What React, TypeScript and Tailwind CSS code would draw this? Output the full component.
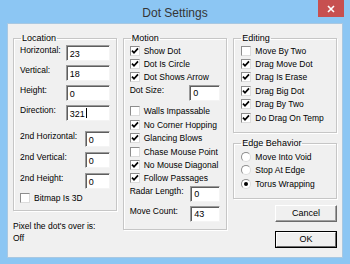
import React from "react";

const Check = ({ checked }: { checked: boolean }) => (
  <span className="w-[10px] h-[10px] bg-white border border-t-[#8d8d8d] border-l-[#8d8d8d] border-b-[#dcdcdc] border-r-[#dcdcdc] flex items-center justify-center shrink-0">
    {checked && (
      <svg width="8" height="8" viewBox="0 0 8 8">
        <path d="M1 3.6 L3 5.8 L7 1.4" stroke="#000" strokeWidth="1.7" fill="none" />
      </svg>
    )}
  </span>
);

const Radio = ({ checked }: { checked: boolean }) => (
  <span className="w-[10px] h-[10px] rounded-full bg-white border border-t-[#8d8d8d] border-l-[#8d8d8d] border-b-[#dcdcdc] border-r-[#dcdcdc] flex items-center justify-center shrink-0">
    {checked && <span className="w-[4px] h-[4px] rounded-full bg-black" />}
  </span>
);

const CheckRow = ({ label, checked }: { label: string; checked: boolean }) => (
  <div className="flex items-center gap-[4px] h-[13.4px]">
    <Check checked={checked} />
    <span className="leading-[10px] whitespace-nowrap">{label}</span>
  </div>
);

const RadioRow = ({ label, checked }: { label: string; checked: boolean }) => (
  <div className="flex items-center gap-[4px] h-[13.5px]">
    <Radio checked={checked} />
    <span className="leading-[10px] whitespace-nowrap">{label}</span>
  </div>
);

const Field = ({ value, w, cursor }: { value: string; w: string; cursor?: boolean }) => (
  <div
    className={`${w} h-[16px] bg-white border border-t-[#9a9a9a] border-l-[#9a9a9a] border-b-[#f4f4f4] border-r-[#f4f4f4] shadow-[inset_1px_1px_0_#5e5e5e] flex items-center pl-[3px] shrink-0`}
  >
    <span className="text-[9px] leading-[10px] pt-[1px]">{value}</span>
    {cursor && <span className="w-[1px] h-[10px] bg-black ml-[1px]" />}
  </div>
);

const LabeledField = ({
  label,
  value,
  w,
  cursor,
}: {
  label: string;
  value: string;
  w: string;
  cursor?: boolean;
}) => (
  <div className="flex items-start justify-between">
    <span className="leading-[10px] whitespace-nowrap">{label}</span>
    <Field value={value} w={w} cursor={cursor} />
  </div>
);

const Group = ({
  title,
  className,
  children,
}: {
  title: string;
  className?: string;
  children: React.ReactNode;
}) => (
  <fieldset className={`border border-[#c6c6c6] shadow-[inset_1px_1px_0_#ffffff,1px_1px_0_#ffffff] px-[6px] ${className ?? ""}`}>
    <legend className="px-[1px] ml-[1px] leading-[12px] text-[9px]">{title}</legend>
    {children}
  </fieldset>
);

export default function App() {
  return (
    <div className="w-[350px] h-[264px] bg-[#8cc6f3] flex flex-col font-['Liberation_Sans',Arial,sans-serif] text-[8.5px] text-black overflow-hidden">
      <div className="h-[23px] grid grid-cols-[1fr_auto_1fr] items-start">
        <div />
        <div className="text-[12px] leading-[12px] text-[#353535] pt-[7px]">Dot Settings</div>
        <div className="flex justify-end pr-[6px]">
          <div className="w-[26px] h-[17px] bg-[#c75050] flex items-center justify-center">
            <svg width="8" height="8" viewBox="0 0 8 8">
              <path d="M1 1 L7 7 M7 1 L1 7" stroke="#fff" strokeWidth="1.6" />
            </svg>
          </div>
        </div>
      </div>
      <div className="mx-[7px] h-[235px] bg-[#f0f0f0] border border-[#a8c8e2] flex gap-[6px] pl-[5px] pr-[5px] pt-[8px]">
        {/* Left column */}
        <div className="w-[104px] flex flex-col">
          <Group title="Location" className="h-[179px]">
            <div className="flex flex-col gap-[4px] pt-[1px]">
              <LabeledField label="Horizontal:" value="23" w="w-[44px]" />
              <LabeledField label="Vertical:" value="18" w="w-[44px]" />
              <LabeledField label="Height:" value="0" w="w-[44px]" />
              <LabeledField label="Direction:" value="321" w="w-[44px]" cursor />
            </div>
            <div className="flex flex-col gap-[5px] mt-[10px]">
              <LabeledField label="2nd Horizontal:" value="0" w="w-[25px]" />
              <LabeledField label="2nd Vertical:" value="0" w="w-[25px]" />
              <LabeledField label="2nd Height:" value="0" w="w-[25px]" />
            </div>
            <div className="mt-[2px]">
              <CheckRow label="Bitmap Is 3D" checked={false} />
            </div>
          </Group>
          <div className="mt-[9px] leading-[12px]">Pixel the dot&apos;s over is:</div>
          <div className="leading-[12px]">Off</div>
        </div>
        {/* Middle column */}
        <div className="w-[105px] flex flex-col">
          <Group title="Motion" className="h-[198px]">
            <CheckRow label="Show Dot" checked />
            <CheckRow label="Dot Is Circle" checked />
            <CheckRow label="Dot Shows Arrow" checked />
            <div className="mt-[0.5px]">
              <LabeledField label="Dot Size:" value="0" w="w-[31px]" />
            </div>
            <div className="mt-[4px]">
              <CheckRow label="Walls Impassable" checked={false} />
              <CheckRow label="No Corner Hopping" checked />
              <CheckRow label="Glancing Blows" checked />
              <CheckRow label="Chase Mouse Point" checked={false} />
              <CheckRow label="No Mouse Diagonal" checked />
              <CheckRow label="Follow Passages" checked />
            </div>
            <div className="flex flex-col gap-[4px] mt-[0.5px]">
              <LabeledField label="Radar Length:" value="0" w="w-[30px]" />
              <LabeledField label="Move Count:" value="43" w="w-[30px]" />
            </div>
          </Group>
        </div>
        {/* Right column */}
        <div className="w-[104px] flex flex-col">
          <Group title="Editing" className="h-[101px]">
            <div className="pl-[1px]">
              <CheckRow label="Move By Two" checked={false} />
              <CheckRow label="Drag Move Dot" checked />
              <CheckRow label="Drag Is Erase" checked />
              <CheckRow label="Drag Big Dot" checked />
              <CheckRow label="Drag By Two" checked />
              <CheckRow label="Do Drag On Temp" checked />
            </div>
          </Group>
          <Group title="Edge Behavior" className="h-[62px] mt-[4px]">
            <div className="pl-[1px] pt-[1px]">
              <RadioRow label="Move Into Void" checked={false} />
              <RadioRow label="Stop At Edge" checked={false} />
              <RadioRow label="Torus Wrapping" checked />
            </div>
          </Group>
          <div className="flex flex-col items-end gap-[9px] mt-[6px]">
            <div className="w-[62px] h-[17px] bg-[#f0f0f0] border border-t-white border-l-white border-b-[#6b6b6b] border-r-[#6b6b6b] shadow-[inset_-1px_-1px_0_#a0a0a0] flex items-center justify-center text-[9px]">
              Cancel
            </div>
            <div className="w-[62px] h-[17px] border border-black flex">
              <div className="flex-1 bg-[#f0f0f0] border border-t-white border-l-white border-b-[#6b6b6b] border-r-[#6b6b6b] flex items-center justify-center text-[9px]">
                OK
              </div>
            </div>
          </div>
        </div>
      </div>
    </div>
  );
}
